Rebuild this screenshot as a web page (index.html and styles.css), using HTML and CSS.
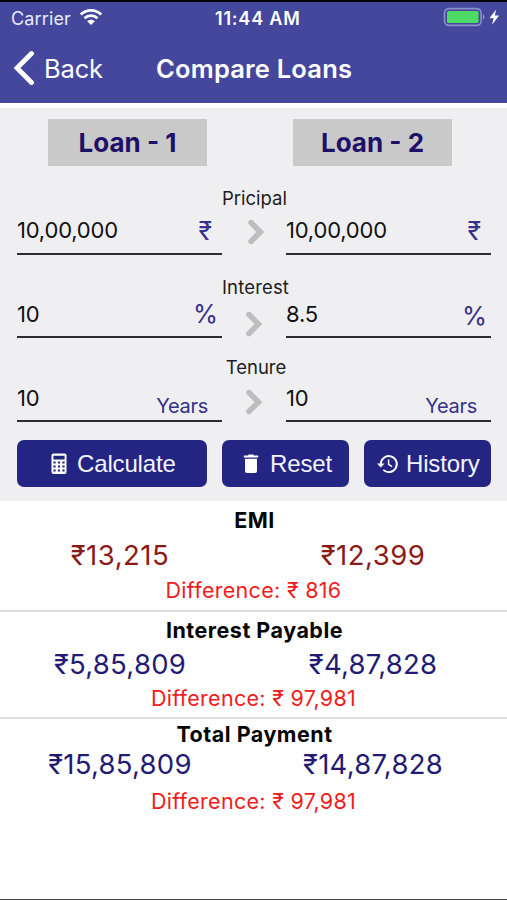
FILE: index.html
```html
<!DOCTYPE html>
<html lang="en">
<head>
<meta charset="utf-8">
<title>Compare Loans</title>
<link rel="stylesheet" href="styles.css">
</head>
<body>
<div class="screen">
  <header class="header">
    <div class="status">
      <span class="carrier">Carrier</span>
      <svg class="wifi" width="24" height="18" viewBox="0 0 24 18"><g fill="none" stroke="#fff" stroke-width="2.8"><path d="M1.8 6.4C7.6.9 16.4.9 22.2 6.4"/><path d="M5.5 10.3c3.7-3.5 9.3-3.5 13 0"/></g><path fill="#fff" d="M8.2 13.2c2.2-2 5.4-2 7.6 0L12 17z"/></svg>
      <span class="time">11:44 AM</span>
      <svg class="battery" width="60" height="20" viewBox="0 0 60 20"><rect x="1.5" y="1.6" width="36.6" height="16.8" rx="4.4" fill="none" stroke="#8d90c9" stroke-width="1.6"/><rect x="4" y="4" width="31.6" height="12" rx="1.5" fill="#4cd964"/><path d="M39.8 7.2c2.2.8 2.2 4.8 0 5.6z" fill="#8d90c9"/><path d="M53.2 2.5 46.4 11.2h4.2l-1.5 6.6 7-9.2h-4.3z" fill="#fff"/></svg>
    </div>
    <nav class="nav">
      <svg class="back-icon" width="22" height="36" viewBox="0 0 22 36"><path d="M19.5 3.5 5 18l14.5 14.5" fill="none" stroke="#fff" stroke-width="4.8" stroke-linecap="round"/></svg>
      <span class="back">Back</span>
      <h1 class="title">Compare Loans</h1>
    </nav>
  </header>

  <main class="form">
    <div class="heads">
      <div class="head">Loan - 1</div>
      <div class="head">Loan - 2</div>
    </div>

    <section class="group principal">
      <div class="label">Pricipal</div>
      <div class="fields">
        <div class="field"><span class="value">10,00,000</span><span class="unit">₹</span></div>
        <svg class="chevron" width="18" height="26" viewBox="0 0 18 26"><path d="M4 3.6 13.4 13 4 22.4" fill="none" stroke="#bdbdbe" stroke-width="5.6" stroke-linecap="round"/></svg>
        <div class="field"><span class="value">10,00,000</span><span class="unit">₹</span></div>
      </div>
    </section>

    <section class="group interest">
      <div class="label">Interest</div>
      <div class="fields">
        <div class="field"><span class="value">10</span><span class="unit">%</span></div>
        <svg class="chevron" width="18" height="26" viewBox="0 0 18 26"><path d="M4 3.6 13.4 13 4 22.4" fill="none" stroke="#bdbdbe" stroke-width="5.6" stroke-linecap="round"/></svg>
        <div class="field"><span class="value">8.5</span><span class="unit lower">%</span></div>
      </div>
    </section>

    <section class="group tenure">
      <div class="label">Tenure</div>
      <div class="fields">
        <div class="field"><span class="value">10</span><span class="unit">Years</span></div>
        <svg class="chevron" width="18" height="26" viewBox="0 0 18 26"><path d="M4 3.6 13.4 13 4 22.4" fill="none" stroke="#bdbdbe" stroke-width="5.6" stroke-linecap="round"/></svg>
        <div class="field"><span class="value">10</span><span class="unit">Years</span></div>
      </div>
    </section>

    <div class="buttons">
      <button class="btn calculate"><svg width="16" height="22" viewBox="0 0 16 22"><rect x=".5" y=".5" width="15" height="20.5" rx="2" fill="#fff"/><g fill="#242482"><path d="M2.4 2.8h11.2v3.6H2.4zM2.4 8.4h2.2v2H2.4zM6.9 8.4h2.2v2H6.9zM11.4 8.4h2.2v2h-2.2zM2.4 12.4h2.2v2H2.4zM6.9 12.4h2.2v2H6.9zM11.4 12.4h2.2v2h-2.2zM2.4 16.4h2.2v2H2.4zM6.9 16.4h2.2v2H6.9zM11.4 16.4h2.2v2h-2.2z"/></g></svg><span>Calculate</span></button>
      <button class="btn reset"><svg width="16" height="20" viewBox="0 0 16 20"><path fill="#fff" d="M.8 1.5h4L5.8.5h4.4l1 1h4v2H.8zM2 4.7h12v12.4q0 1.9-1.9 1.9H3.9Q2 19 2 17.1z"/></svg><span>Reset</span></button>
      <button class="btn history"><svg width="22" height="20" viewBox="0 0 22 20"><path d="M3.8 10a8 8 0 1 1 2.5 5.9" fill="none" stroke="#fff" stroke-width="1.9"/><path d="M0 9.4h7.6L3.8 13.6z" fill="#fff"/><path d="M11.6 5.6v4.8l3.5 2.2" fill="none" stroke="#fff" stroke-width="1.5"/></svg><span>History</span></button>
    </div>
  </main>

  <section class="result emi">
    <h2>EMI</h2>
    <div class="amounts"><span>₹13,215</span><span>₹12,399</span></div>
    <p>Difference: ₹ 816</p>
  </section>
  <section class="result payable">
    <h2>Interest Payable</h2>
    <div class="amounts"><span>₹5,85,809</span><span>₹4,87,828</span></div>
    <p>Difference: ₹ 97,981</p>
  </section>
  <section class="result total">
    <h2>Total Payment</h2>
    <div class="amounts"><span>₹15,85,809</span><span>₹14,87,828</span></div>
    <p>Difference: ₹ 97,981</p>
  </section>
</div>
</body>
</html>
```
FILE: styles.css
```css
* { box-sizing: border-box; }
body { margin: 0; background: #fff; font-family: Inter, "Liberation Sans", sans-serif; }
h1, h2, p { margin: 0; }
svg { display: block; flex: none; }
.screen {
  width: 507px; height: 900px; overflow: hidden; background: #fff;
  border-top: 2px solid #000; border-bottom: 1px solid #444;
  white-space: nowrap;
}

.header { height: 101px; background: #44479b; color: #fff; }
.status { display: flex; height: 34px; padding-left: 11px; line-height: 33px; font-size: 18px; }
.carrier { width: 68px; color: #e9eafa; letter-spacing: .15px; }
.wifi { margin-top: 6px; }
.time { width: 100px; margin-left: 112px; font-size: 18px; font-weight: 600; letter-spacing: .8px; }
.battery { margin: 5px 0 0 128px; }
.nav { display: flex; height: 66px; padding-left: 12px; line-height: 66px; }
.back-icon { margin-top: 14px; }
.back { width: 112px; margin-left: 10px; font-size: 25.5px; letter-spacing: -.15px; }
.title { font-size: 25.5px; font-weight: 600; line-height: 66px; letter-spacing: .2px; }

.form { height: 393px; margin-top: 5px; padding: 11px 16px 0 17px; background: #efeff1; }
.heads { display: flex; gap: 86px; padding-left: 31px; }
.head {
  width: 159px; height: 47px; background: #c9c9ca; color: #1c1069;
  font-size: 26px; font-weight: 650; line-height: 48px; text-align: center;
}

.label { height: 22px; font-size: 18.5px; line-height: 22px; text-align: center; color: #1c1c1e; }
.fields { display: grid; grid-template-columns: 205px 1fr 205px; }
.field { display: flex; justify-content: space-between; border-bottom: 2px solid #2c2c32; color: #111; }
.value { font-size: 22px; letter-spacing: -.2px; }
.unit { color: #37308c; }
.principal { margin-top: 21px; }
.principal .label { padding-left: 1px; }
.principal .field { height: 46px; line-height: 42px; }
.principal .unit { padding: 1px 10px 0 0; font-size: 25px; }
.principal .chevron { margin: 10px 0 0 25px; }
.interest { margin-top: 21px; }
.interest .label { padding-left: 3px; letter-spacing: .15px; }
.interest .field { height: 40px; line-height: 32px; }
.interest .unit { padding-right: 4px; font-size: 25.5px; }
.interest .lower { padding-top: 2px; }
.interest .chevron { margin: 13px 0 0 23px; }
.tenure { margin-top: 18px; }
.tenure .label { padding-left: 4px; }
.tenure .field { height: 44px; line-height: 40px; }
.tenure .unit { padding: 8px 14px 0 0; font-size: 20px; letter-spacing: -.3px; }
.tenure .chevron { margin: 11px 0 0 23px; }

.buttons { display: grid; grid-template-columns: 190px 127px 127px; gap: 15px; margin-top: 18px; }
.btn {
  display: flex; align-items: center; height: 47px; padding: 0; border: 0; border-radius: 7px;
  background: #242482; color: #f4f4ff; font: 24px/48px "Liberation Sans", sans-serif; letter-spacing: -.15px;
}
.calculate { padding-left: 34px; gap: 10px; }
.reset { padding-left: 21px; gap: 11px; }
.history { padding-left: 13px; gap: 7px; }

.result { text-align: center; border-bottom: 2px solid #dedede; }
.result h2 { padding-left: 2px; font-size: 21.5px; font-weight: 650; line-height: 26px; letter-spacing: .5px; color: #050505; }
.amounts { display: grid; grid-template-columns: 240px 266px; font-size: 27.5px; line-height: 36px; letter-spacing: .25px; color: #231b73; }
.result p { font-size: 21.5px; line-height: 26px; letter-spacing: .3px; color: #f21b1b; }
.emi { height: 111px; padding-top: 6px; }
.emi .amounts { padding-top: 4px; color: #8a1a13; letter-spacing: .5px; }
.emi p { padding-top: 4px; }
.payable { height: 107px; padding-top: 5px; }
.payable .amounts { padding-top: 3px; }
.payable p { padding-top: 3px; }
.total { padding-top: 2px; border-bottom: 0; }
.total .amounts { margin-top: -1px; }
.total p { padding-top: 6px; }
```
